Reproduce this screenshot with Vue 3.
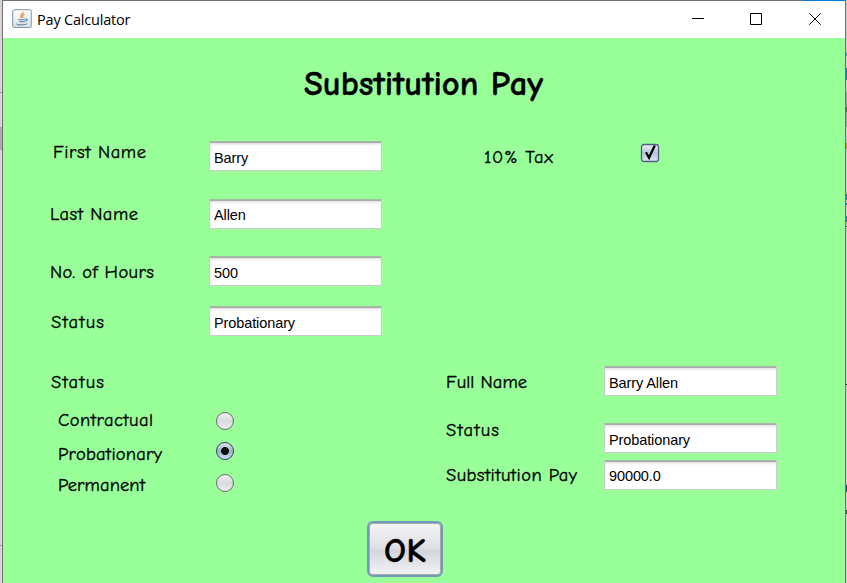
<script setup>
import { h, ref } from 'vue'

// Caption whose letters are spaced evenly over a fixed width.
const Caption = (props) =>
  h('svg', { class: 'caption', width: props.w, height: 24 }, [
    h('text', { x: 0, y: 18, textLength: props.w }, props.text)
  ])
Caption.props = ['text', 'w']

const inputs = ref([
  { key: 'first', label: 'First Name', w: 93, value: 'Barry' },
  { key: 'last', label: 'Last Name', w: 88, value: 'Allen' },
  { key: 'hours', label: 'No. of Hours', w: 104, value: '500' },
  { key: 'state', label: 'Status', w: 53, value: 'Probationary' }
])
const choices = [
  { key: 'contractual', label: 'Contractual', w: 95 },
  { key: 'probationary', label: 'Probationary', w: 104 },
  { key: 'permanent', label: 'Permanent', w: 87 }
]
const chosen = ref('probationary')
const results = [
  { key: 'full', label: 'Full Name', w: 81, value: 'Barry Allen' },
  { key: 'rstate', label: 'Status', w: 53, value: 'Probationary' },
  { key: 'pay', label: 'Substitution Pay', w: 131, value: '90000.0' }
]
</script>

<template>
  <div class="desktop">
    <div class="edge-left"></div>
    <div class="window">
      <header class="titlebar">
        <svg class="java" width="20" height="20" viewBox="0 0 20 20">
          <defs><linearGradient id="tile" x2="0" y2="1"><stop stop-color="#fff" /><stop offset="1" stop-color="#d9e0e5" /></linearGradient></defs>
          <rect x=".7" y=".7" width="18.6" height="17.8" rx="1.5" fill="url(#tile)" stroke="#8196a5" />
          <path d="M10.8 3c.7 2-3 2.8-2 4.6.3.8 1 1 1.2 1.7M12.3 5.2c-2.7 1.4-1.5 2-1.4 3.6" fill="none" stroke="#e88a42" stroke-width="1.3" />
          <path d="M6.3 10.2c2 .7 5.5.6 7 0M7 12.2c1.6.7 4.5.7 6 0M13.6 10c2-.5 2.3 1.6-.2 2.2M5 14.7c-1.4 1.5 8.5 1.7 10 0" fill="none" stroke="#6489a9" stroke-width="1.2" />
        </svg>
        <span class="name">Pay Calculator</span>
        <svg class="controls" width="130" height="14" viewBox="0 0 130 14" fill="none" stroke="#000">
          <path d="M0 6.5h12M58.5 1.5h11v11h-11zM117.3 1.3l11.4 11.4M128.7 1.3l-11.4 11.4" />
        </svg>
      </header>
      <main class="panel">
        <svg class="heading" width="239" height="40"><text x="0" y="30" textLength="239">Substitution Pay</text></svg>
        <div class="top">
          <section class="inputs">
            <div v-for="f in inputs" :key="f.key" :class="['row', f.key]">
              <Caption :text="f.label" :w="f.w" />
              <input v-model="f.value" class="field" />
            </div>
          </section>
          <div class="tax">
            <Caption text="10% Tax" :w="69" />
            <svg class="check" width="20" height="20" viewBox="0 0 20 20">
              <defs><linearGradient id="box" x2="0" y2="1"><stop stop-color="#edf0f5" /><stop offset=".5" stop-color="#b8c6d9" /><stop offset="1" stop-color="#dbe7f5" /></linearGradient></defs>
              <rect x="1.5" y="1.5" width="17" height="17" rx="2.5" fill="url(#box)" stroke="#4d6080" stroke-width="1.3" />
              <path d="M6 9.3l3 5.4L14.8 2.5" fill="none" stroke="#000" stroke-width="2.3" />
            </svg>
          </div>
        </div>
        <div class="bottom">
          <section class="choices">
            <Caption text="Status" :w="53" />
            <div v-for="c in choices" :key="c.key" :class="['choice', c.key]" @click="chosen = c.key">
              <Caption :text="c.label" :w="c.w" />
              <span :class="['radio', { on: chosen === c.key }]"></span>
            </div>
          </section>
          <section class="results">
            <div v-for="r in results" :key="r.key" :class="['row', r.key]">
              <Caption :text="r.label" :w="r.w" />
              <input :value="r.value" class="field" readonly />
            </div>
          </section>
        </div>
        <button class="ok"><svg width="42" height="40"><text x="0" y="33" textLength="42">OK</text></svg></button>
      </main>
    </div>
    <div class="edge-right"></div>
  </div>
</template>

<style>
body { margin: 0; overflow: hidden; }
</style>

<style scoped>
* { box-sizing: border-box; }
.desktop { width: 847px; height: 583px; display: flex; overflow: hidden; }
.edge-left { width: 2px; background: linear-gradient(#d5d5d5 0 92px, #999 92px 93px, #d5d5d5 93px 127px, #aaa 127px 150px, #d5d5d5 150px 545px, #999 545px 546px, #d5d5d5 546px); }
.edge-right { width: 1px; background: linear-gradient(#d0cecd 0 53px, #4b81bf 53px 56px, #ccc 56px 68px, #2570bd 68px 80px, #ccc 80px 92px, #999da3 92px 107px, #555 107px 112px, #999da3 112px 127px, #ccc 127px 143px, #c98b36 143px 149px, #ccc 149px 194px, #3972b3 194px 200px, #ccc 200px 203px, #1756a0 203px 205px, #ccc 205px 216px, #3972b3 216px 222px, #ccc 222px 226px, #1756a0 226px 227px, #ccc 227px 384px, #000 384px 385px, #ccc 385px 485px, #234582 485px 492px, #ccc 492px 510px, #345 510px 514px, #ccc 514px); }
.window { width: 844px; flex: none; display: flex; flex-direction: column; border: solid #706e70; border-width: 0 1px; }
.titlebar { height: 38px; flex: none; display: flex; align-items: center; padding: 0 23px 0 9px; background: linear-gradient(90deg, #706e70 0 800px, #0078d7 800px) top / 100% 1px no-repeat #fff; }
.name { margin: 1px 0 0 5px; font: 14.5px "Open Sans", "Noto Sans", sans-serif; letter-spacing: -.2px; color: #000; }
.controls { margin-left: auto; }
.panel { flex: 1; background: #99ff99; display: flex; flex-direction: column; }
.caption { display: block; flex: none; overflow: visible; font: 18.5px "Comic Sans MS", "Comic Neue", "Open Sans", cursive, sans-serif; stroke: #000; stroke-width: .35px; }
.heading { flex: none; display: block; overflow: visible; margin: 27px 0 0 301px; font: bold 34.5px "Comic Sans MS", "Comic Neue", "Open Sans", sans-serif; stroke: #000; stroke-width: .4px; }
.top { height: 223px; margin-top: 35px; display: flex; }
.inputs { width: 379px; }
.row { display: flex; justify-content: space-between; align-items: flex-start; }
.field { width: 173px; height: 30px; margin: 0; padding: 4px 4px 0; border: 1px solid #ccc; border-top-color: #a3bca3; outline: 0; background: linear-gradient(#aaa 1px, #e1e1e1 1px, #fff 4px); font: 14.5px "Liberation Sans", Arial, sans-serif; letter-spacing: -.1px; color: #000; }
.first { height: 58px; padding: 0 0 0 50px; }
.first .field { margin-top: 1px; }
.last { height: 58px; padding-left: 47px; }
.last .caption { margin-top: 4px; }
.last .field { margin-top: 1px; padding-top: 2px; }
.hours { height: 50px; padding-left: 47px; }
.state { padding-left: 48px; }
.hours .caption, .state .caption { margin-top: 4px; }
.tax { height: 30px; display: flex; margin-left: 102px; }
.tax .caption { margin-top: 5px; }
.check { margin: 3px 0 0 87px; }
.bottom { height: 150px; display: flex; }
.choices { width: 240px; padding: 7px 0 0 48px; }
.choice { width: 183px; display: flex; justify-content: space-between; padding-left: 7px; }
.contractual { margin-top: 14px; }
.probationary { margin-top: 10px; }
.permanent { margin-top: 7px; }
.radio { width: 18px; height: 18px; margin-top: 4px; border: 1px solid #6c6c74; border-radius: 50%; background: linear-gradient(#f0f0f3, #d8dae0 50%, #ecedf1); }
.probationary .radio { margin-top: 0; }
.permanent .radio { margin-top: 1px; }
.radio.on { border-color: #30455f; background: radial-gradient(circle, #111 0 3.6px, transparent 4.4px), linear-gradient(#e4eaf2, #9db0c8 50%, #c9def5); }
.results { width: 534px; padding: 3px 0 0 203px; }
.full { height: 57px; }
.full .caption { margin-top: 4px; }
.rstate { height: 37px; }
.rstate .caption { margin-top: -5px; }
.pay .caption { margin-top: 3px; }
.pay .field { padding-top: 2px; }
.ok { width: 76px; height: 56px; margin: 8px 0 0 364px; padding: 0; display: grid; place-items: center; border: 2px solid #7299b8; border-radius: 6px; background: linear-gradient(#f4f4f6, #dfe0e5 48%, #d3d5db 53%, #f3f4f8); box-shadow: inset 0 0 0 1px #aaa; }
.ok svg { overflow: visible; font: bold 34.5px "Comic Sans MS", "Comic Neue", "Open Sans", sans-serif; stroke: #000; stroke-width: .4px; }
</style>
